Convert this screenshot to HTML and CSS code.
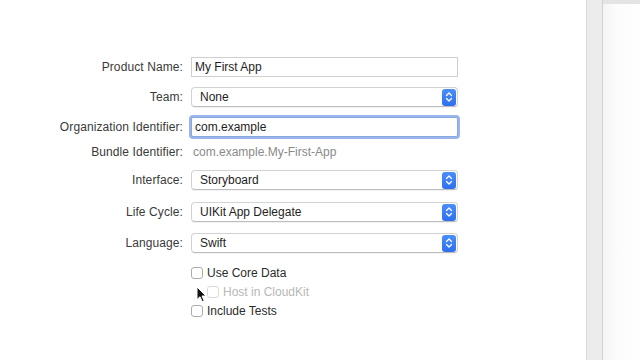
FILE: index.html
```html
<!DOCTYPE html>
<html>
<head>
<meta charset="utf-8">
<link rel="stylesheet" href="styles.css">
</head>
<body>
<div class="window">
  <div class="sheet">
    <div class="form">
      <div class="row r1">
        <div class="label">Product Name:</div>
        <div class="textfield">My First App</div>
      </div>
      <div class="row r2">
        <div class="label">Team:</div>
        <div class="popup"><span>None</span><span class="stepper"><svg width="8" height="12" viewBox="0 0 8 12"><path d="M1.5 4.5 L4 2 L6.5 4.5 M1.5 7.5 L4 10 L6.5 7.5" fill="none" stroke="#fff" stroke-width="1.3" stroke-linecap="round" stroke-linejoin="round"/></svg></span></div>
      </div>
      <div class="row r3">
        <div class="label">Organization Identifier:</div>
        <div class="textfield focused">com.example</div>
      </div>
      <div class="row r4">
        <div class="label">Bundle Identifier:</div>
        <div class="static">com.example.My-First-App</div>
      </div>
      <div class="row r5">
        <div class="label">Interface:</div>
        <div class="popup"><span>Storyboard</span><span class="stepper"><svg width="8" height="12" viewBox="0 0 8 12"><path d="M1.5 4.5 L4 2 L6.5 4.5 M1.5 7.5 L4 10 L6.5 7.5" fill="none" stroke="#fff" stroke-width="1.3" stroke-linecap="round" stroke-linejoin="round"/></svg></span></div>
      </div>
      <div class="row r6">
        <div class="label">Life Cycle:</div>
        <div class="popup"><span>UIKit App Delegate</span><span class="stepper"><svg width="8" height="12" viewBox="0 0 8 12"><path d="M1.5 4.5 L4 2 L6.5 4.5 M1.5 7.5 L4 10 L6.5 7.5" fill="none" stroke="#fff" stroke-width="1.3" stroke-linecap="round" stroke-linejoin="round"/></svg></span></div>
      </div>
      <div class="row r7">
        <div class="label">Language:</div>
        <div class="popup"><span>Swift</span><span class="stepper"><svg width="8" height="12" viewBox="0 0 8 12"><path d="M1.5 4.5 L4 2 L6.5 4.5 M1.5 7.5 L4 10 L6.5 7.5" fill="none" stroke="#fff" stroke-width="1.3" stroke-linecap="round" stroke-linejoin="round"/></svg></span></div>
      </div>
      <div class="checks">
        <div class="check"><span class="box"></span><span>Use Core Data</span></div>
        <div class="check sub disabled"><span class="box"></span><span>Host in CloudKit</span></div>
        <div class="check"><span class="box"></span><span>Include Tests</span></div>
        <svg class="cursor" width="12" height="17" viewBox="0 0 12 17"><path d="M1 1 L1 13.5 L4 10.8 L6.2 15.6 L8.2 14.7 L6 10 L10 10 Z" fill="#111" stroke="#fff" stroke-width="1" stroke-linejoin="round"/></svg>
      </div>
    </div>
  </div>
  <div class="strip"></div>
  <div class="side"></div>
</div>
</body>
</html>
```
FILE: styles.css
```css
html, body {
  margin: 0;
  padding: 0;
  background: #ffffff;
}
body {
  font-family: "Liberation Sans", Arial, sans-serif;
  font-size: 12px;
  color: #2b2b2b;
}
.window {
  display: flex;
  width: 640px;
  height: 360px;
  overflow: hidden;
}
.sheet {
  width: 586px;
  flex: none;
  border-right: 1px solid #d9d9d9;
  background: #ffffff;
}
.strip {
  width: 15px;
  flex: none;
  background: #ececec;
  border-right: 1px solid #d2d2d2;
}
.side {
  flex: 1;
  background: linear-gradient(90deg, #f5f5f5 0%, #fcfcfc 40%, #fefefe 100%);
  border-top: 4px solid #e4e4e4;
  box-sizing: border-box;
}
.form {
  padding-top: 57px;
  display: flex;
  flex-direction: column;
}
.row {
  display: flex;
  align-items: center;
  height: 20px;
}
.r2, .r3 { margin-top: 10px; }
.r4 { margin-top: 5px; }
.r5 { margin-top: 8px; }
.r6 { margin-top: 12px; }
.r7 { margin-top: 11px; }
.label {
  width: 191px;
  flex: none;
  text-align: right;
  padding-right: 8px;
  box-sizing: border-box;
  color: #3a3a3a;
  letter-spacing: 0.1px;
}
.textfield {
  width: 267px;
  height: 20px;
  box-sizing: border-box;
  border: 1px solid #cfcfcf;
  padding-left: 3px;
  display: flex;
  align-items: center;
  color: #1e1e1e;
  background: #fff;
}
.textfield.focused {
  border: 1px solid #8aa8e0;
  box-shadow: 0 0 0 2px #9ab6ec;
  border-radius: 2px;
}
.static {
  padding-left: 2px;
  color: #8a8a8a;
}
.popup {
  width: 267px;
  height: 20px;
  box-sizing: border-box;
  border: 1px solid #d2d2d2;
  border-bottom-color: #bdbdbd;
  border-radius: 4px;
  box-shadow: 0 1px 1px rgba(0,0,0,0.06);
  background: #fff;
  display: flex;
  align-items: center;
  justify-content: space-between;
  padding-left: 8px;
  padding-right: 1px;
  color: #1e1e1e;
}
.stepper {
  width: 14px;
  height: 17px;
  border-radius: 3px;
  background: linear-gradient(180deg, #4a8ef8 0%, #2e6ff0 100%);
  display: flex;
  align-items: center;
  justify-content: center;
}
.checks {
  position: relative;
  margin-top: 10px;
  padding-left: 191px;
  display: flex;
  flex-direction: column;
}
.check {
  display: flex;
  align-items: center;
  height: 19px;
  gap: 4px;
  color: #2b2b2b;
}
.check.sub {
  padding-left: 16px;
}
.box {
  width: 12px;
  height: 12px;
  box-sizing: border-box;
  border: 1px solid #adadad;
  border-radius: 3px;
  background: #fff;
}
.disabled {
  color: #b8b8b8;
}
.disabled .box {
  border-color: #dadada;
}
.cursor {
  position: absolute;
  left: 196px;
  top: 23px;
}
```
